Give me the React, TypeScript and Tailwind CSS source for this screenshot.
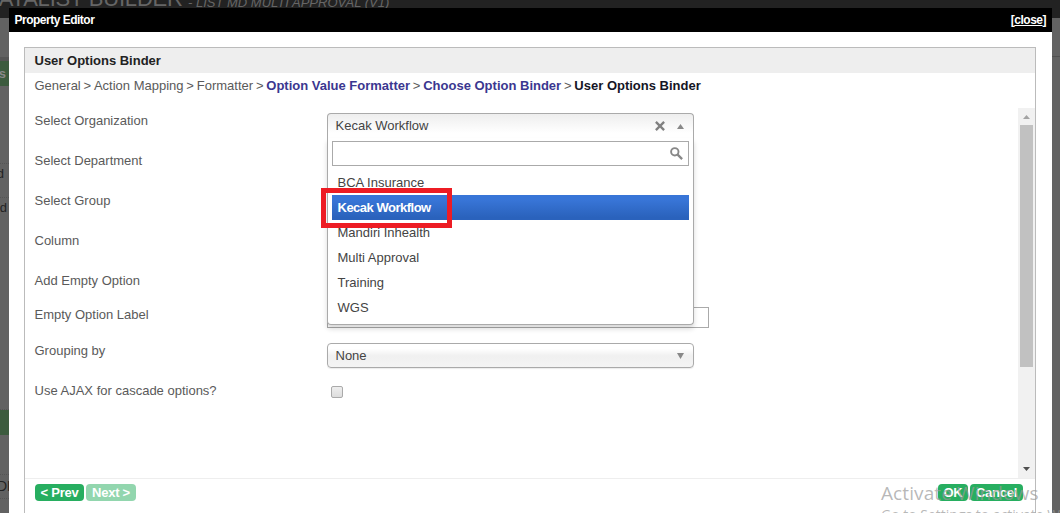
import type { ReactNode } from "react";

const options = ["BCA Insurance", "Kecak Workflow", "Mandiri Inhealth", "Multi Approval", "Training", "WGS"];

function Triangle({ up, className }: { up?: boolean; className: string }) {
  return (
    <svg className={className} viewBox="0 0 8 6" preserveAspectRatio="none" fill="currentColor">
      <path d={up ? "M4 0 8 6H0Z" : "M0 0H8L4 6Z"} />
    </svg>
  );
}

function Row({ label, height, children }: { label: string; height: string; children?: ReactNode }) {
  return (
    <div className={`flex items-start ${height}`}>
      <div className="w-[292px] shrink-0 pt-[5px] leading-[15px]"><span className="-ml-[0.5px]">{label}</span></div>
      {children}
    </div>
  );
}

function OrganizationSelect() {
  return (
    <div className="relative h-[25px] w-[367px]">
      <div className="flex h-[25px] items-center rounded-t-[4px] border border-b-0 border-[#aaa] bg-linear-to-b from-[#eee] to-white to-80% pl-[7.5px] text-[#444]">
        <span className="grow">Kecak Workflow</span>
        <svg className="mr-[12px] size-[10px] text-[#808080]" viewBox="0 0 9 9" fill="none" stroke="currentColor" strokeWidth="2.1">
          <path d="m.8.8 7.4 7.4M8.2.8.8 8.2" />
        </svg>
        <Triangle up className="mr-[9px] h-[5px] w-[7px] text-[#888]" />
      </div>
      <div className="absolute top-[25px] left-0 z-10 h-[187px] w-[367px] rounded-b-[4px] border border-t-0 border-[#aaa] bg-white px-[4px] pt-[3px] text-[#444] shadow-[0_4px_5px_rgba(0,0,0,0.15)]">
        <div className="mb-[4px] flex h-[25px] items-center justify-end border border-[#aaa] pr-[5px] pb-px">
          <svg className="size-[13px] text-[#888]" viewBox="0 0 13 13" fill="none" stroke="currentColor">
            <circle cx="4.8" cy="4.8" r="3.7" strokeWidth="1.9" />
            <path d="m7.6 7.6 4.5 4.5" strokeWidth="2.3" />
          </svg>
        </div>
        {options.map((option) => (
          <div
            key={option}
            className={
              option === "Kecak Workflow"
                ? "flex h-[25px] items-center bg-linear-to-b from-[#3875d7] from-20% to-[#2a62bc] to-90% pl-[5.5px] font-bold tracking-[-0.5px] text-white"
                : "flex h-[25px] items-center pl-[5.5px]"
            }
          >
            {option}
          </div>
        ))}
      </div>
      <div className="absolute top-[75px] left-[-6px] z-20 h-[40px] w-[131px] border-[5px] border-[#ed1c24]" />
    </div>
  );
}

function Button({ children, className }: { children: ReactNode; className: string }) {
  return (
    <button className={`flex h-[17px] items-center justify-center rounded-[4px] bg-[#27ae60] font-bold tracking-[-0.25px] text-white ${className}`}>
      {children}
    </button>
  );
}

export default function App() {
  return (
    <div className="relative h-[513px] w-[1060px] overflow-hidden bg-[#626262] font-['Liberation_Sans',sans-serif] text-[13px] text-[#5a5a5a]">
      <div className="flex h-[18px] items-start bg-[#222] whitespace-nowrap text-[#666]">
        <div className="-mt-[13px] -ml-[17px] w-[205px] text-[22px] leading-[24px] tracking-[-0.2px]">DATALIST BUILDER</div>
        <div className="-mt-[6px] text-[13px] leading-[18px] italic">- LIST MD MULTI APPROVAL (V1)</div>
      </div>
      <div className="flex justify-between">
        <div className="flex h-[495px] w-[9px] flex-col overflow-hidden text-[#222]">
          <div className="h-[39px] shrink-0" />
          <div className="h-[4px] shrink-0 bg-[#555]" />
          <div className="flex h-[25px] shrink-0 items-center justify-end bg-[#3c5b3e] pr-[3px] font-bold text-[#888]">s</div>
          <div className="h-[78px] shrink-0 border-b border-dotted border-[#555]" />
          <div className="flex h-[20px] shrink-0 items-center justify-end pr-[5px]">d</div>
          <div className="h-[14px] shrink-0 border-b border-dotted border-[#555]" />
          <div className="flex h-[20px] shrink-0 items-center justify-end pr-[2px]">ed</div>
          <div className="h-[192px] shrink-0 border-b border-dotted border-[#555]" />
          <div className="h-[25px] shrink-0 bg-[#3c5b3e]" />
          <div className="h-[40px] shrink-0 border-b border-dotted border-[#555]" />
          <div className="flex h-[24px] shrink-0 items-center border-b border-dotted border-[#555] text-[14px]"><span className="-ml-[3px]">DF</span></div>
        </div>
        <div className="h-[39px] w-[8px] border-b border-[#505050]" />
      </div>

      <main className="absolute top-[8px] left-[9px] flex h-[505px] w-[1043px] flex-col overflow-hidden bg-white">
        <header className="flex h-[24px] shrink-0 items-center justify-between bg-black pr-[6px] pl-[5.5px] text-[12px] font-bold text-white">
          <span className="tracking-[-0.5px]">Property Editor</span>
          <span className="tracking-[-0.5px]">[<u>close</u>]</span>
        </header>
        <section className="mt-[15px] ml-[15px] flex h-[480px] w-[1012px] shrink-0 flex-col border border-[#bbb]">
          <h1 className="flex h-[25px] shrink-0 items-center bg-[#eee] pl-[9.5px] font-bold text-[#222]">User Options Binder</h1>
          <nav className="flex h-[35px] shrink-0 items-start gap-[2.8px] pt-[5px] pl-[9.5px] leading-[15px] whitespace-nowrap">
            <span>General</span><span>&gt;</span>
            <span>Action Mapping</span><span>&gt;</span>
            <span>Formatter</span><span>&gt;</span>
            <b className="text-[#3b3790]">Option Value Formatter</b><span>&gt;</span>
            <b className="text-[#3b3790]">Choose Option Binder</b><span>&gt;</span>
            <b className="text-[#151525]">User Options Binder</b>
          </nav>
          <div className="flex h-[371px] shrink-0 border-b border-[#eee]">
            <div className="flex grow flex-col pt-0 pl-[10px]">
              <Row label="Select Organization" height="h-[40px]">
                <div className="pt-[5px]"><OrganizationSelect /></div>
              </Row>
              <Row label="Select Department" height="h-[40px]" />
              <Row label="Select Group" height="h-[40px]" />
              <Row label="Column" height="h-[40px]" />
              <Row label="Add Empty Option" height="h-[34px]" />
              <Row label="Empty Option Label" height="h-[36px]">
                <div className="mt-[5px] h-[21px] w-[382px] border border-[#aaa]" />
              </Row>
              <Row label="Grouping by" height="h-[40px]">
                <div className="mt-[5px] flex h-[25px] w-[367px] items-center justify-between rounded-[4px] border border-[#aaa] bg-linear-to-b from-white from-20% via-[#f0f0f0] via-52% to-[#f4f4f4] pr-[9px] pl-[7.5px] text-[#444] shadow-[0_1px_1px_rgba(0,0,0,0.08)]">
                  None
                  <Triangle className="h-[6px] w-[7px] text-[#888]" />
                </div>
              </Row>
              <Row label="Use AJAX for cascade options?" height="h-[40px]">
                <div className="mt-[8px] ml-[4px] size-[12px] rounded-[2px] border border-[#aaa] bg-linear-to-b from-[#eee] to-[#ddd]" />
              </Row>
            </div>
            <div className="flex w-[17px] flex-col items-center bg-[#f1f1f1]">
              <Triangle up className="mt-[7px] h-[4px] w-[7px] shrink-0 text-[#a3a3a3]" />
              <div className="mt-[6px] h-[242px] w-[13px] shrink-0 bg-[#c1c1c1]" />
              <Triangle className="mt-auto mb-[7px] h-[4px] w-[7px] shrink-0 text-[#505050]" />
            </div>
          </div>
          <footer className="flex items-center justify-between pt-[5px] pr-[12px] pl-[10px]">
            <div className="flex gap-[2px]">
              <Button className="w-[49px]">&lt; Prev</Button>
              <Button className="w-[50px] opacity-50">Next &gt;</Button>
            </div>
            <div className="flex gap-[2px]">
              <Button className="w-[30px]">OK</Button>
              <Button className="w-[53px]">Cancel</Button>
            </div>
          </footer>
        </section>
      </main>

      <div className="pointer-events-none absolute top-[480px] left-[881px] z-30 font-['Open_Sans',sans-serif] whitespace-nowrap text-[#999]/70">
        <div className="text-[19px] leading-[26px] tracking-[0.1px]">Activate Windows</div>
        <div className="text-[14px] leading-[17px]">Go to Settings to activate Windows.</div>
      </div>
    </div>
  );
}
